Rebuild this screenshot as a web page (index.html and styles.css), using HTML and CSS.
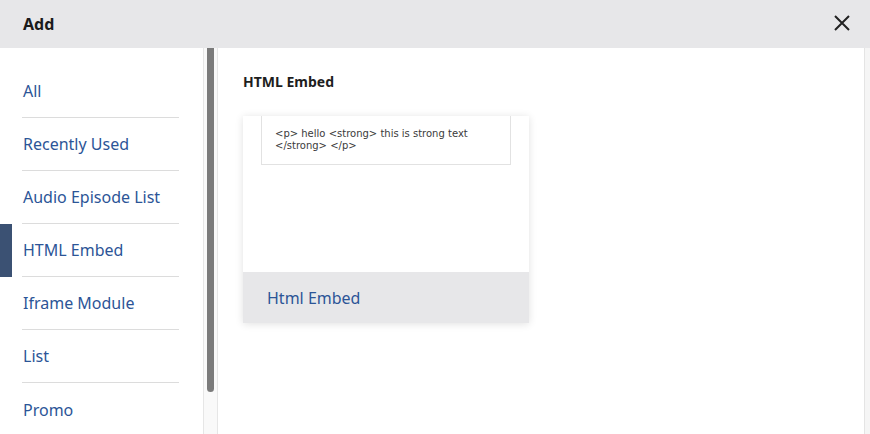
FILE: index.html
```html
<!DOCTYPE html>
<html>
<head>
<meta charset="utf-8">
<link rel="stylesheet" href="styles.css">
</head>
<body>
<div class="dialog">
  <header class="header">
    <h1 class="title">Add</h1>
    <button class="close" aria-label="Close">
      <svg width="16" height="16" viewBox="0 0 16 16"><path d="M1 1 L15 15 M15 1 L1 15" stroke="#222" stroke-width="2" fill="none"/></svg>
    </button>
  </header>
  <div class="content">
    <nav class="sidebar">
      <ul class="nav-list">
        <li class="nav-item">All</li>
        <li class="nav-item">Recently Used</li>
        <li class="nav-item">Audio Episode List</li>
        <li class="nav-item active">HTML Embed</li>
        <li class="nav-item">Iframe Module</li>
        <li class="nav-item">List</li>
        <li class="nav-item">Promo</li>
      </ul>
    </nav>
    <div class="scroll-track"><div class="scroll-thumb"></div></div>
    <main class="main">
      <h2 class="section-title">HTML Embed</h2>
      <div class="card">
        <div class="preview">
          <div class="preview-box">&lt;p&gt; hello &lt;strong&gt; this is strong text &lt;/strong&gt; &lt;/p&gt;</div>
        </div>
        <div class="card-footer">Html Embed</div>
      </div>
    </main>
    <div class="right-track"></div>
  </div>
</div>
</body>
</html>
```
FILE: styles.css
```css
* { box-sizing: border-box; }
html, body { margin: 0; padding: 0; }
body {
  font-family: "Noto Sans", "Open Sans", sans-serif;
  background: #fff;
  width: 870px;
  height: 434px;
  overflow: hidden;
}
.dialog { display: flex; flex-direction: column; height: 434px; }
.header {
  height: 48px;
  background: #e7e7e9;
  display: flex;
  align-items: center;
  justify-content: space-between;
  padding: 0 20px 0 23px;
  flex-shrink: 0;
}
.title {
  margin: 0;
  font-size: 16px;
  font-weight: 700;
  color: #1b1b1b;
}
.close {
  border: 0;
  background: none;
  padding: 0;
  width: 16px;
  height: 16px;
  display: block;
  margin-top: -2px;
}
.close svg { display: block; }
.content { display: flex; flex: 1; min-height: 0; }
.sidebar { width: 203px; flex-shrink: 0; overflow: hidden; }
.nav-list {
  list-style: none;
  margin: 0;
  padding: 17px 24px 0 22px;
}
.nav-item {
  position: relative;
  height: 53px;
  border-bottom: 1px solid #dcdcdc;
  display: flex;
  align-items: center;
  padding-left: 1px;
  font-size: 16px;
  color: #2c5597;
}
.nav-item:last-child { border-bottom: 0; }
.nav-item.active::before {
  content: "";
  position: absolute;
  left: -22px;
  top: 0;
  bottom: -1px;
  width: 12px;
  background: #3b5173;
}
.scroll-track {
  width: 15px;
  flex-shrink: 0;
  background: #f9f9f9;
  border-left: 1px solid #e6e6e6;
  border-right: 1px solid #e6e6e6;
  padding: 0 3px;
}
.scroll-thumb {
  height: 344px;
  background: #7b7b7b;
  border-radius: 0 0 4px 4px;
}
.main {
  flex: 1;
  padding: 24px 25px 0 25px;
  border-right: 1px solid #e4e4e4;
}
.section-title {
  margin: 0 0 24px 0;
  font-size: 14px;
  line-height: 20px;
  font-weight: 700;
  color: #1e1e1e;
}
.card {
  width: 286px;
  box-shadow: 0 1px 8px rgba(0, 0, 0, 0.12);
  background: #fff;
}
.preview {
  height: 156px;
  padding: 0 18px;
}
.preview-box {
  height: 49px;
  border: 1px solid #e2e2e2;
  border-top: 0;
  padding: 12px 13px 0 13px;
  font-family: "DejaVu Sans", sans-serif;
  font-size: 10px;
  line-height: 12px;
  color: #3a3a3a;
}
.card-footer {
  height: 51px;
  background: #e7e7e9;
  display: flex;
  align-items: center;
  padding-left: 24px;
  font-size: 16px;
  color: #2c5597;
}
.right-track {
  width: 5px;
  flex-shrink: 0;
  background: #f5f5f5;
}
```
